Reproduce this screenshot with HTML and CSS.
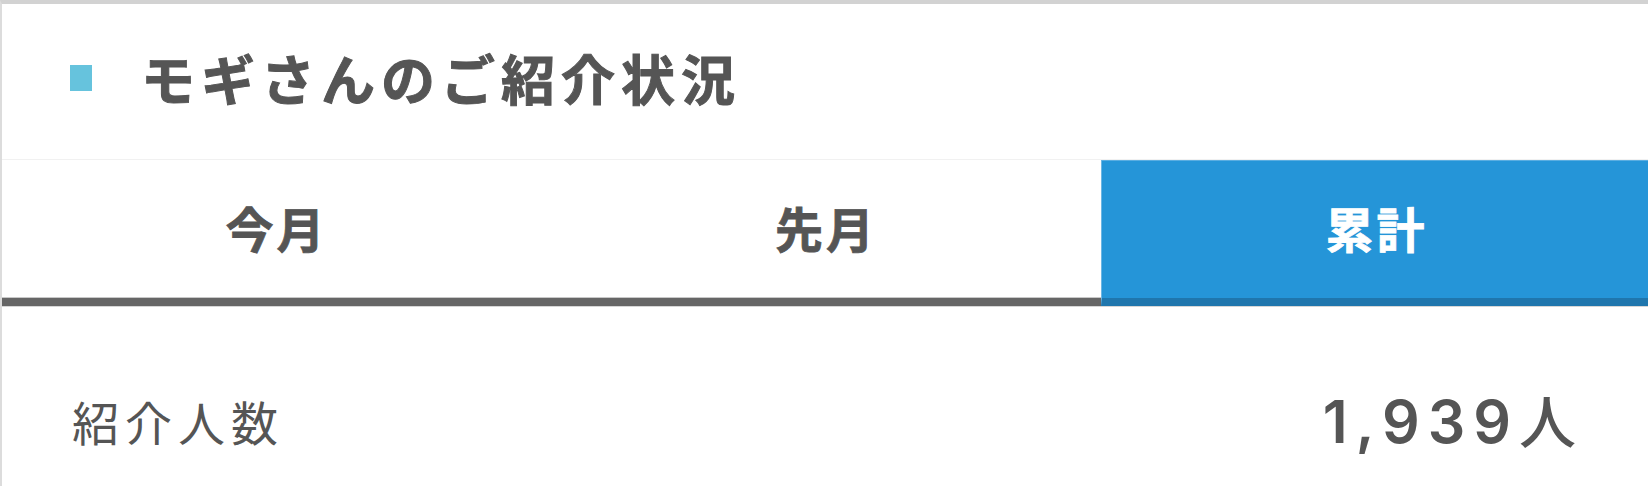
FILE: index.html
```html
<!DOCTYPE html>
<html lang="ja">
<head>
<meta charset="utf-8">
<title>紹介状況</title>
<link rel="stylesheet" href="styles.css">
</head>
<body>
<div class="panel">
  <header class="panel-head">
    <span class="head-mark"></span>
    <h1 class="head-title">モギさんのご紹介状況</h1>
  </header>
  <nav class="tabs">
    <div class="tab"><span class="tab-label">今月</span></div>
    <div class="tab"><span class="tab-label">先月</span></div>
    <div class="tab is-active"><span class="tab-label">累計</span></div>
  </nav>
  <section class="stats">
    <div class="stat-row">
      <span class="stat-name">紹介人数</span>
      <span class="stat-value"><span class="stat-num">1,939</span><span class="stat-unit">人</span></span>
    </div>
  </section>
</div>
</body>
</html>
```
FILE: styles.css
```css
* { box-sizing: border-box; }
html, body { margin: 0; padding: 0; background: #fff; }
body {
  width: 1648px;
  height: 486px;
  overflow: hidden;
  font-family: "Noto Sans CJK JP", "Noto Sans", sans-serif;
  color: #555;
}
.panel {
  height: 486px;
  border-top: 4px solid #d2d2d2;
  border-left: 2px solid #dcdcdc;
}
.panel-head {
  height: 156px;
  display: flex;
  align-items: center;
  padding-left: 68px;
  padding-bottom: 8px;
  border-bottom: 1px solid #f1f1f1;
}
.head-mark {
  width: 22px;
  height: 26px;
  background: #66c3dd;
  margin-right: 49px;
  flex: none;
}
.head-title {
  margin: 0;
  font-size: 54px;
  font-weight: 700;
  letter-spacing: 6px;
  line-height: 1;
  color: #555;
  -webkit-text-stroke: 1px #555;
}
.tabs {
  display: grid;
  grid-template-columns: 546fr 553fr 547fr;
  border-bottom: 1px solid #d6d6d6;
}
.tab {
  height: 146px;
  display: flex;
  align-items: center;
  justify-content: center;
  padding-bottom: 4px;
  border-bottom: 8px solid #666;
  box-shadow: inset 0 -1px 0 #c8c8c8;
}
.tab-label {
  font-size: 48px;
  font-weight: 700;
  letter-spacing: 3px;
  line-height: 1;
  color: #555;
  padding-left: 3px;
  -webkit-text-stroke: 0.8px currentColor;
}
.tab.is-active {
  background: #2595d8;
  border-bottom-color: #1f76ad;
  border-left: 1px solid #6cb6e4;
  box-shadow: inset 0 1px 0 #5aaee2;
}
.tab.is-active .tab-label { color: #fff; }
.stats {
  padding: 78px 72px 0 70px;
}
.stat-row {
  height: 70px;
  display: flex;
  align-items: center;
  justify-content: space-between;
}
.stat-name {
  font-size: 47px;
  font-weight: 400;
  letter-spacing: 6px;
  line-height: 1;
}
.stat-value {
  display: flex;
  align-items: baseline;
  line-height: 1;
}
.stat-num {
  font-family: Inter, "Noto Sans", sans-serif;
  font-size: 59px;
  font-weight: 600;
  letter-spacing: 8px;
}
.stat-unit {
  font-size: 57px;
  font-weight: 500;
}
```
